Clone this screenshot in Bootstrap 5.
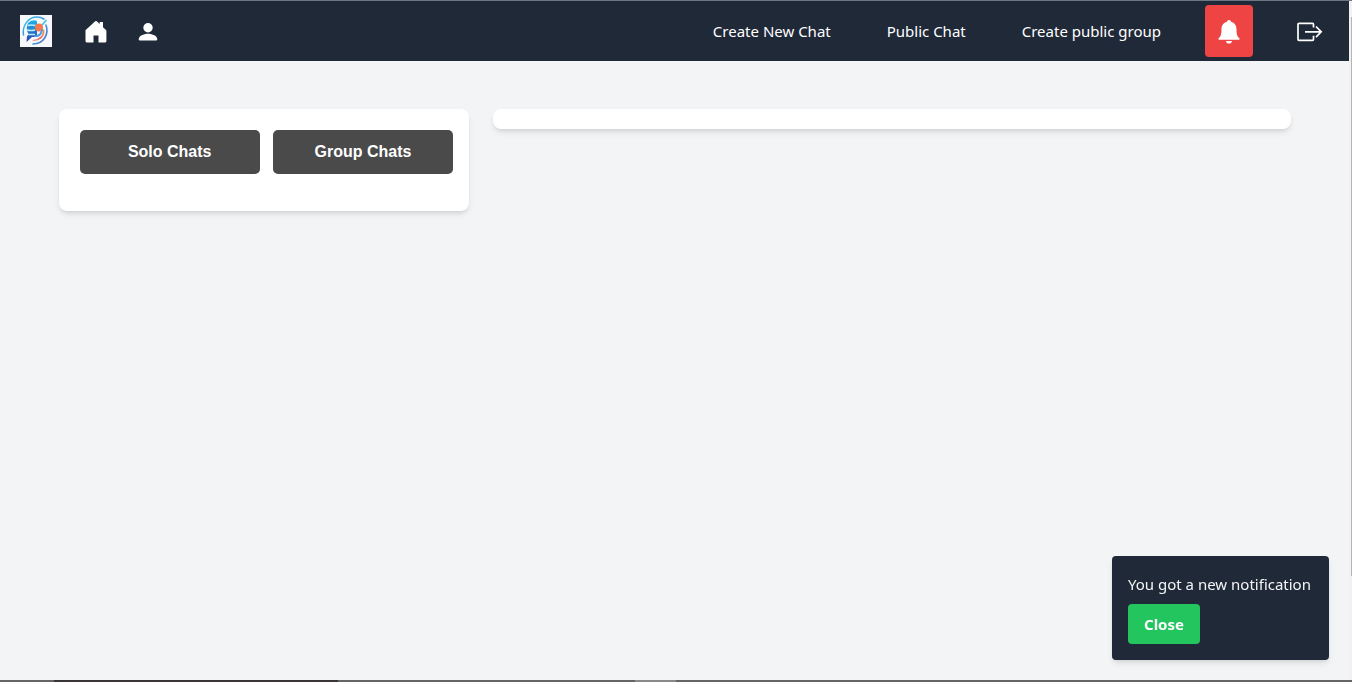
<!DOCTYPE html>
<html lang="en">
<head>
<meta charset="utf-8">
<meta name="viewport" content="width=device-width, initial-scale=1">
<title>Chats</title>
<link href="https://cdn.jsdelivr.net/npm/bootstrap@5.3.0/dist/css/bootstrap.min.css" rel="stylesheet">
<style>
body { font-family: "Noto Sans", "Open Sans", sans-serif; font-size: 15px; line-height: 24px; background: #f3f4f6; }
.scroll-track { width: 3px; background: #f1f1f3; }
.scroll-thumb { width: 1px; height: 82vh; margin-top: 16px; background: #b4b4b4; }
.window-top { height: 1px; background: #6b7883; }
.window-bottom { height: 2px; background: linear-gradient(to right, #666465 4%, #3a3638 4%, #3a3638 25%, #666465 25%, #666465 47%, #8a8889 47%, #8a8889 50%, #666465 50%); }
.topbar { height: 60px; padding: 0 24px 0 20px; background: #1f2937; }
.topbar a { color: #fff; text-decoration: none; }
.topbar svg { display: block; }
.main-links { gap: 56px; }
.bell-btn { width: 48px; height: 52px; background: #ef4444; border: 0; border-radius: 4px; margin: 0 44px; padding: 0 12px; }
.bell-btn:hover { background: #dc2626; }
.page { max-width: 1280px; padding: 48px 24px; gap: 24px; }
.panel { background: #fff; box-shadow: 0 4px 6px -1px rgba(0,0,0,.1), 0 2px 4px -2px rgba(0,0,0,.1); }
.chat-list { width: 33.3333%; border-radius: 8px; padding: 21px 16px 37px 21px; gap: 13px; }
.chat-view { border-radius: 8px; height: 20px; }
.tab-btn { height: 44px; background: #4a4a4a; color: #fff; border: 0; border-radius: 5px; font: bold 16px/24px "Liberation Sans", sans-serif; }
.tab-btn:hover { background: #333; color: #fff; }
.notice { right: 23px; bottom: 22px; width: 217px; background: #1f2937; color: #f3f4f6; border-radius: 4px; padding: 16px; box-shadow: 0 4px 6px -1px rgba(0,0,0,.1), 0 2px 4px -2px rgba(0,0,0,.1); }
.close-btn { width: 72px; height: 40px; background: #22c55e; color: #fff; border: 0; border-radius: 4px; font-weight: 700; font-size: 15px; margin-top: 8px; padding: 0; }
.close-btn:hover { background: #16a34a; color: #fff; }
</style>
</head>
<body class="vh-100 d-flex flex-column overflow-hidden">
<div class="window-top"></div>
<div class="d-flex flex-grow-1">
  <div class="flex-grow-1">
    <nav class="topbar d-flex align-items-center justify-content-between" aria-label="Main">
      <div class="d-flex align-items-center">
        <a href="#" aria-label="Logo">
          <svg width="32" height="32" viewBox="0 0 32 32">
            <defs>
              <linearGradient id="ring" x1="0" y1="0" x2="1" y2="1"><stop offset="0" stop-color="#35cbe8"/><stop offset=".5" stop-color="#3b9be0"/><stop offset="1" stop-color="#5160b8"/></linearGradient>
              <linearGradient id="face" x1="0" y1="0" x2="0" y2="1"><stop offset="0" stop-color="#1fb4ec"/><stop offset="1" stop-color="#2b3fa8"/></linearGradient>
              <linearGradient id="warm" x1="1" y1="0" x2="0" y2="1"><stop offset="0" stop-color="#ff9350"/><stop offset=".5" stop-color="#f26452"/><stop offset="1" stop-color="#e9a5a4"/></linearGradient>
            </defs>
            <rect width="32" height="32" fill="#f6f8fc"/>
            <g fill="none" stroke-linecap="round">
              <path d="M3.500 20C2 11 8 2 17 2c3 0 5 .8 7 2" stroke="url(#ring)" stroke-width="1.500"/>
              <path d="M26 10c3 9-2 19-13 19" stroke="url(#ring)" stroke-width="1.700"/>
              <path d="M23.500 15c1 6-4 10-10 10.500" stroke="url(#warm)" stroke-width="1.700"/>
              <path d="M22.500 9.500l3.500-4" stroke="#42c8d9" stroke-width="1.800"/>
            </g>
            <path d="M8 8q4-4 9-2v14q-1 2-5 2l-5.500 5 .5-6 2-1.500q-4-5-1-11.500z" fill="url(#face)"/>
            <path d="M7.500 10.500q4-1 8 0M7 15q4 1 8 0M9 19.500h6" stroke="#baf0fb" stroke-width="1.300" fill="none"/>
            <circle cx="19" cy="12.500" r="4" fill="#f8774c"/>
            <path d="M22 15q-1 6-6 6" stroke="#4c9be2" stroke-width="2" fill="none" stroke-linecap="round"/>
          </svg>
        </a>
        <a href="#" aria-label="Home" class="ms-4 ps-2">
          <svg width="24" height="24" viewBox="0 0 24 24" fill="#fff"><path d="M1.700 11 11.200 2.300q.8-.7 1.600 0l2.800 2.600V3.500q0-.5.500-.5h2.400q.5 0 .5.500v4.700l3 2.800q.4.500.4 1.200V22q0 1.500-1.500 1.500H14.500v-7h-5v7H3q-1.500 0-1.500-1.500v-9.800q-.2-.700.200-1.200z"/></svg>
        </a>
        <a href="#" aria-label="Profile" class="ms-4 ps-1">
          <svg width="24" height="24" viewBox="0 0 24 24" fill="#fff"><circle cx="12" cy="8.700" r="4.700"/><path d="M2.700 20.500C2.700 17 7.500 14.800 12 14.800s9.300 2.200 9.300 5.700q0 1-1.300 1H4q-1.300 0-1.300-1z"/></svg>
        </a>
      </div>
      <div class="d-flex align-items-center">
        <div class="main-links d-flex">
          <a href="#">Create New Chat</a>
          <a href="#">Public Chat</a>
          <a href="#">Create public group</a>
        </div>
        <button type="button" class="bell-btn" aria-label="Notifications">
          <svg width="24" height="26" viewBox="0 0 24 26" fill="#fff"><path d="M12 2c-1.200 0-2 .8-2 1.800C6.500 4.700 4.500 7.500 4.500 11.200c0 5-.7 7.200-2.800 9.100-.7.700-.4 1.500.6 1.500h19.400c1 0 1.300-.8.600-1.500-2.100-1.900-2.800-4.100-2.800-9.100 0-3.700-2-6.500-5.500-7.400 0-1-.8-1.800-2-1.800zM9 23h6c0 1.500-1.200 2.600-3 2.600S9 24.500 9 23z"/></svg>
        </button>
        <a href="#" aria-label="Log out">
          <svg width="28" height="24" viewBox="0 0 28 24" fill="none" stroke="#fff" stroke-width="1.700"><path d="M16.500 8.500V5.300q0-1-1-1H2q-1 0-1 1v15q0 1 1 1h13.500q1 0 1-1v-3.500M8 12.800h16M19 7.500l5.200 5.300-5.200 5.300"/></svg>
        </a>
      </div>
    </nav>
    <main class="page mx-auto d-flex align-items-start">
      <section class="panel chat-list d-flex flex-shrink-0" aria-label="Chat list">
        <button type="button" class="tab-btn btn flex-fill w-50">Solo Chats</button>
        <button type="button" class="tab-btn btn flex-fill w-50">Group Chats</button>
      </section>
      <section class="panel chat-view flex-grow-1" aria-label="Conversation"></section>
    </main>
  </div>
  <div class="scroll-track d-flex justify-content-end"><div class="scroll-thumb"></div></div>
</div>
<div class="window-bottom"></div>
<div class="notice position-fixed" role="status">
  <div class="text-nowrap">You got a new notification</div>
  <button type="button" class="close-btn btn">Close</button>
</div>
<script src="https://cdn.jsdelivr.net/npm/bootstrap@5.3.0/dist/js/bootstrap.bundle.min.js"></script>
</body>
</html>
